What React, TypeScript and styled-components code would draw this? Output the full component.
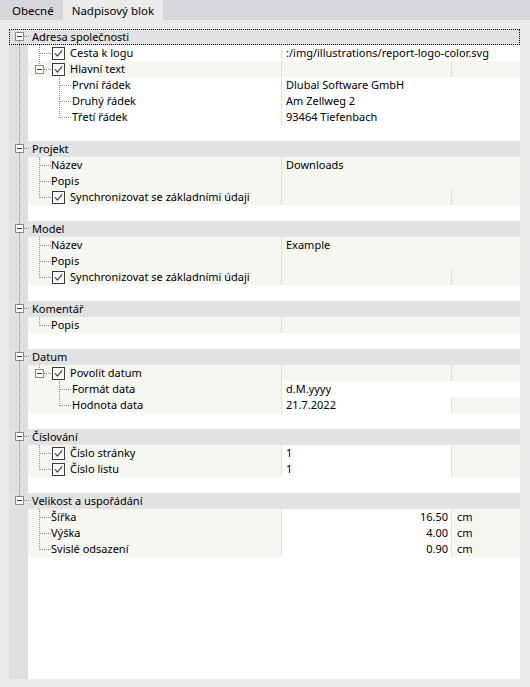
import React from 'react';
import styled, { createGlobalStyle } from 'styled-components';

const GlobalStyle = createGlobalStyle`
  html, body { margin: 0; padding: 0; background: #ebebeb; }
  body {
    font-family: "Noto Sans", "Segoe UI", sans-serif;
    font-size: 11px;
    color: #000;
  }
`;

type Bg = 'white' | 'cream';

interface Item {
  label: string;
  check?: boolean;
  value?: string;
  unit?: string;
  right?: boolean;
  split?: boolean;
  labelBg?: Bg;
  valueBg?: Bg;
  unitBg?: Bg;
  children?: Item[];
}

interface Section {
  title: string;
  focused?: boolean;
  items: Item[];
}

const sections: Section[] = [
  {
    title: 'Adresa společnosti',
    focused: true,
    items: [
      { label: 'Cesta k logu', check: true, value: ':/img/illustrations/report-logo-color.svg', labelBg: 'white', valueBg: 'white' },
      {
        label: 'Hlavní text',
        check: true,
        split: true,
        children: [
          { label: 'První řádek', value: 'Dlubal Software GmbH', labelBg: 'white', valueBg: 'white' },
          { label: 'Druhý řádek', value: 'Am Zellweg 2', labelBg: 'white', valueBg: 'white' },
          { label: 'Třetí řádek', value: '93464 Tiefenbach', labelBg: 'white', valueBg: 'white' },
        ],
      },
    ],
  },
  {
    title: 'Projekt',
    items: [
      { label: 'Název', value: 'Downloads' },
      { label: 'Popis' },
      { label: 'Synchronizovat se základními údaji', check: true, split: true },
    ],
  },
  {
    title: 'Model',
    items: [
      { label: 'Název', value: 'Example' },
      { label: 'Popis' },
      { label: 'Synchronizovat se základními údaji', check: true, split: true },
    ],
  },
  {
    title: 'Komentář',
    items: [{ label: 'Popis' }],
  },
  {
    title: 'Datum',
    items: [
      {
        label: 'Povolit datum',
        check: true,
        split: true,
        children: [
          { label: 'Formát data', value: 'd.M.yyyy', valueBg: 'white' },
          { label: 'Hodnota data', value: '21.7.2022', split: true, valueBg: 'white' },
        ],
      },
    ],
  },
  {
    title: 'Číslování',
    items: [
      { label: 'Číslo stránky', check: true, value: '1', split: true, valueBg: 'white' },
      { label: 'Číslo listu', check: true, value: '1', split: true, valueBg: 'white' },
    ],
  },
  {
    title: 'Velikost a uspořádání',
    items: [
      { label: 'Šířka', value: '16.50', unit: 'cm', right: true, split: true, valueBg: 'white' },
      { label: 'Výška', value: '4.00', unit: 'cm', right: true, split: true, valueBg: 'white' },
      { label: 'Svislé odsazení', value: '0.90', unit: 'cm', right: true, split: true, valueBg: 'white' },
    ],
  },
];

const LINE = '#8f8f8f';
const bgColor = (b?: Bg) => (b === 'white' ? '#ffffff' : '#f7f7f2');

/* ---------- layout ---------- */

const Window = styled.div`
  width: 530px;
  height: 687px;
  display: flex;
  flex-direction: column;
  background: #ebebeb;
`;

const TabBar = styled.div`
  height: 20px;
  flex: none;
  display: flex;
  padding-left: 3px;
  background: #d6d6db;
`;

const Tab = styled.div<{ $active?: boolean }>`
  display: flex;
  align-items: center;
  padding: 0 9px;
  font-size: 11.5px;
  background: ${(p) => (p.$active ? '#ebebeb' : 'transparent')};
  color: #000;
`;

const Body = styled.div`
  flex: 1;
  display: flex;
  padding: 9px 10px 8px 9px;
  min-height: 0;
`;

const Panel = styled.div`
  flex: 1;
  display: flex;
  flex-direction: column;
  background: #ffffff;
`;

const HeaderRow = styled.div<{ $focused?: boolean }>`
  height: 16px;
  display: flex;
  align-items: center;
  background: #e2e2e2;
  outline: ${(p) => (p.$focused ? '1px dotted #000' : 'none')};
  outline-offset: -1px;
`;

const HeaderTitle = styled.span`
  line-height: 16px;
  white-space: nowrap;
`;

const PropRow = styled.div`
  height: 16px;
  display: grid;
  grid-template-columns: 19px 253px 170px 1fr;
`;

const Gutter = styled.div`
  background: #dfdfdf;
  display: flex;
`;

const LabelCell = styled.div<{ $bg?: Bg }>`
  display: flex;
  align-items: center;
  background: ${(p) => bgColor(p.$bg)};
  white-space: nowrap;
  overflow: hidden;
`;

const LabelText = styled.span<{ $gap: number }>`
  margin-left: ${(p) => p.$gap}px;
  line-height: 16px;
`;

const ValueCell = styled.div<{ $bg?: Bg; $span?: boolean; $right?: boolean }>`
  grid-column: ${(p) => (p.$span ? 'span 2' : 'auto')};
  border-left: 1px solid #dedede;
  background: ${(p) => bgColor(p.$bg)};
  padding: 0 3px 0 4px;
  line-height: 16px;
  text-align: ${(p) => (p.$right ? 'right' : 'left')};
  white-space: nowrap;
  overflow: hidden;
`;

const UnitCell = styled.div<{ $bg?: Bg }>`
  border-left: 1px solid #dedede;
  background: ${(p) => bgColor(p.$bg)};
  padding-left: 5px;
  line-height: 16px;
  white-space: nowrap;
`;

const BlankRow = styled.div`
  height: 16px;
  display: grid;
  grid-template-columns: 19px 1fr;
`;

const Filler = styled.div`
  flex: 1;
  display: grid;
  grid-template-columns: 19px 1fr;
`;

const CheckBox = styled.span`
  width: 13px;
  height: 13px;
  flex: none;
  display: inline-flex;
  box-sizing: border-box;
  border: 1px solid #3a3a3a;
  background: #fff;
`;

/* ---------- drawings (tree connectors, checkbox mark) ---------- */

const dash = { stroke: LINE, strokeWidth: 1, strokeDasharray: '1 1', shapeRendering: 'crispEdges' as const };

const RootLine = ({ show }: { show: boolean }) => (
  <svg width="19" height="16" style={{ display: 'block' }}>
    {show && <line x1="10.5" y1="0" x2="10.5" y2="16" {...dash} />}
  </svg>
);

const FillerLine = () => <svg width="19" height="1" />;

const Expander = ({ x, y }: { x: number; y: number }) => (
  <g shapeRendering="crispEdges">
    <rect x={x + 0.5} y={y + 0.5} width="8" height="8" fill="#fff" stroke="#8a8a8a" />
    <line x1={x + 2} y1={y + 4.5} x2={x + 7} y2={y + 4.5} stroke="#333" />
  </g>
);

const HeaderGlyph = ({ first, last }: { first: boolean; last: boolean }) => (
  <svg width="23" height="16" style={{ display: 'block', flex: 'none' }}>
    {!first && <line x1="10.5" y1="0" x2="10.5" y2="3" {...dash} />}
    {!last && <line x1="10.5" y1="12" x2="10.5" y2="16" {...dash} />}
    <line x1="15" y1="7.5" x2="21" y2="7.5" {...dash} />
    <Expander x={6} y={3} />
  </svg>
);

/* level 1 connector: 24px wide, vertical at x=11 */
const Level1Glyph = ({ last, expander, continueBelow }: { last: boolean; expander?: boolean; continueBelow?: boolean }) => (
  <svg width="24" height="16" style={{ display: 'block', flex: 'none' }}>
    {expander ? (
      <>
        <line x1="11.5" y1="0" x2="11.5" y2="4" {...dash} />
        {(!last || continueBelow) && <line x1="11.5" y1="13" x2="11.5" y2="16" {...dash} />}
        <line x1="16" y1="8.5" x2="23" y2="8.5" {...dash} />
        <Expander x={7} y={4} />
      </>
    ) : (
      <>
        <line x1="11.5" y1="0" x2="11.5" y2={last ? 9 : 16} {...dash} />
        <line x1="12" y1="8.5" x2="24" y2="8.5" {...dash} />
      </>
    )}
  </svg>
);

/* level 2 connector: 44px wide, parent line at x=11, own vertical at x=31 */
const Level2Glyph = ({ last, parentContinues }: { last: boolean; parentContinues: boolean }) => (
  <svg width="44" height="16" style={{ display: 'block', flex: 'none' }}>
    {parentContinues && <line x1="11.5" y1="0" x2="11.5" y2="16" {...dash} />}
    <line x1="31.5" y1="0" x2="31.5" y2={last ? 9 : 16} {...dash} />
    <line x1="32" y1="8.5" x2="43" y2="8.5" {...dash} />
  </svg>
);

const CheckMark = () => (
  <svg width="11" height="11" viewBox="0 0 11 11" style={{ display: 'block' }}>
    <path d="M2 5.5 L4.5 8 L9 2.5" fill="none" stroke="#4a4a4a" strokeWidth="1.2" />
  </svg>
);

/* ---------- row components ---------- */

const Values = ({ item }: { item: Item }) => {
  if (item.split) {
    return (
      <>
        <ValueCell $bg={item.valueBg} $right={item.right}>{item.value ?? ''}</ValueCell>
        <UnitCell $bg={item.unitBg}>{item.unit ?? ''}</UnitCell>
      </>
    );
  }
  return (
    <ValueCell $bg={item.valueBg} $span>
      {item.value ?? ''}
    </ValueCell>
  );
};

const Prop = ({
  item,
  glyph,
  rootLine,
  textGap,
}: {
  item: Item;
  glyph: React.ReactNode;
  rootLine: boolean;
  textGap: number;
}) => (
  <PropRow>
    <Gutter>
      <RootLine show={rootLine} />
    </Gutter>
    <LabelCell $bg={item.labelBg}>
      {glyph}
      {item.check && (
        <CheckBox>
          <CheckMark />
        </CheckBox>
      )}
      <LabelText $gap={item.check ? 5 : textGap}>{item.label}</LabelText>
    </LabelCell>
    <Values item={item} />
  </PropRow>
);

const SectionBlock = ({ section, index, count }: { section: Section; index: number; count: number }) => {
  const isLast = index === count - 1;
  const rows: React.ReactNode[] = [];
  section.items.forEach((item, i) => {
    const lastItem = i === section.items.length - 1;
    const hasKids = !!item.children;
    rows.push(
      <Prop
        key={item.label + i}
        item={item}
        rootLine={!isLast}
        textGap={-1}
        glyph={<Level1Glyph last={lastItem} expander={hasKids} />}
      />
    );
    item.children?.forEach((child, j) => {
      rows.push(
        <Prop
          key={child.label + j}
          item={child}
          rootLine={!isLast}
          textGap={0}
          glyph={<Level2Glyph last={j === item.children!.length - 1} parentContinues={!lastItem} />}
        />
      );
    });
  });
  return (
    <>
      <HeaderRow $focused={section.focused}>
        <HeaderGlyph first={index === 0} last={isLast} />
        <HeaderTitle>{section.title}</HeaderTitle>
      </HeaderRow>
      {rows}
      <BlankRow>
        <Gutter>
          <RootLine show={!isLast} />
        </Gutter>
        <div />
      </BlankRow>
    </>
  );
};

export default function App() {
  return (
    <Window>
      <GlobalStyle />
      <TabBar>
        <Tab>Obecné</Tab>
        <Tab $active>Nadpisový blok</Tab>
      </TabBar>
      <Body>
        <Panel>
          {sections.map((s, i) => (
            <SectionBlock key={s.title} section={s} index={i} count={sections.length} />
          ))}
          <Filler>
            <Gutter>
              <FillerLine />
            </Gutter>
            <div />
          </Filler>
        </Panel>
      </Body>
    </Window>
  );
}
